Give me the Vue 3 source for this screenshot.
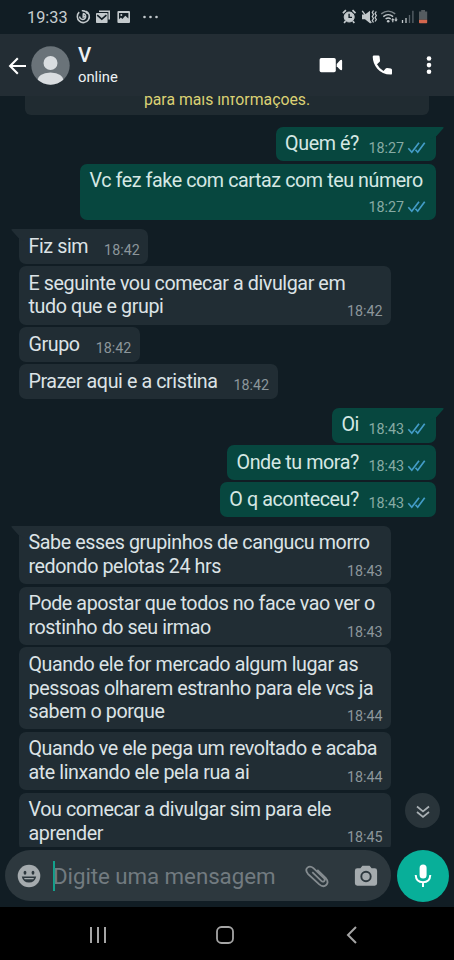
<script setup>
const messages = [
  { lines: ['Quem é?'], time: '18:27', out: true, tail: true },
  { lines: ['Vc fez fake com cartaz com teu número'], time: '18:27', out: true, below: true },
  { lines: ['Fiz sim'], time: '18:42', tail: true },
  { lines: ['E seguinte vou comecar a divulgar em', 'tudo que e grupi'], time: '18:42', wide: true },
  { lines: ['Grupo'], time: '18:42' },
  { lines: ['Prazer aqui e a cristina'], time: '18:42' },
  { lines: ['Oi'], time: '18:43', out: true, tail: true },
  { lines: ['Onde tu mora?'], time: '18:43', out: true },
  { lines: ['O q aconteceu?'], time: '18:43', out: true },
  { lines: ['Sabe esses grupinhos de cangucu morro', 'redondo pelotas 24 hrs'], time: '18:43', wide: true, tail: true },
  { lines: ['Pode apostar que todos no face vao ver o', 'rostinho do seu irmao'], time: '18:43', wide: true },
  { lines: ['Quando ele for mercado algum lugar as', 'pessoas olharem estranho para ele vcs ja', 'sabem o porque'], time: '18:44', wide: true },
  { lines: ['Quando ve ele pega um revoltado e acaba', 'ate linxando ele pela rua ai'], time: '18:44', wide: true },
  { lines: ['Vou comecar a divulgar sim para ele', 'aprender'], time: '18:45', wide: true }
]
</script>

<template>
  <div class="phone">
    <div class="status">
      <span class="clock">19:33</span>
      <svg class="s-left" width="86" height="18" viewBox="0 0 86 18">
        <g fill="none" stroke="#c3c9cc" stroke-width="1.6">
          <path d="M4.2 4.2A6 6 0 1 0 11 3.2" />
          <path d="M6.8 2.8A6 6 0 0 1 12.8 6" />
          <path d="M4.7 8.4a3 3 0 1 0 3-2.9M8.2 6.3v2.8l2-.9" stroke-width="1.5" />
        </g>
        <path d="M24 2.4h11v9.2h-1.6V4H24z" fill="#c3c9cc" />
        <rect x="21" y="5" width="11.6" height="10" rx=".8" fill="#c3c9cc" />
        <path d="m22.2 7.2 4.6 4 4.6-4" fill="none" stroke="#121e25" stroke-width="1.6" />
        <path d="M43.5 3h10.4q1.1 0 1.1 1.1v9.8q0 1.1-1.1 1.1H43.500q-1.100 0-1.100-1.100V4.100Q42.400 3 43.500 3z" fill="#c3c9cc" />
        <path d="M44 5h9.400v5.600L50.300 7.700l-2.900 3.200-1.500-1.500L44 11.200z" fill="#121e25" />
        <circle cx="46.300" cy="7" r="1" fill="#c3c9cc" />
        <g fill="#c3c9cc"><circle cx="69.500" cy="9" r="1.300" /><circle cx="75.500" cy="9" r="1.300" /><circle cx="81.500" cy="9" r="1.300" /></g>
      </svg>
      <svg class="s-right" width="88" height="18" viewBox="0 0 88 18">
        <g fill="none" stroke="#c3c9cc">
          <circle cx="7.200" cy="9" r="5" fill="#c3c9cc" stroke-width="1" />
          <path d="m.9 5.200 3-3M13.500 5.200l-3-3M3.600 13l-1.500 2M10.800 13l1.500 2" stroke-width="1.700" />
          <path d="M7.100 5.700v3.700h2.900" stroke="#121e25" stroke-width="1.400" />
          <path d="m20.200 2.800 9 12.200" stroke-width="1.300" />
          <path d="M31.500 2.500l-1.200 2 1.200 2-1.200 2 1.200 2-1.200 2 1.200 2M34.300 3.500l-1.200 2 1.200 2-1.200 2 1.200 2-1.200 2" stroke-width="1.300" />
        </g>
        <path d="M20 6.500h3l5-3.800v12.500l-5-3.900h-3z" fill="#c3c9cc" />
        <g fill="none" stroke="#c3c9cc" stroke-width="1.400">
          <path d="M39.200 5.900q7-5.600 14 0" stroke="#7c858a" /><path d="M41.300 8.600q4.900-3.900 9.800 0M43.600 11q2.600-2 5.200 0" />
        </g>
        <circle cx="46.200" cy="13.300" r="1.300" fill="#c3c9cc" />
        <path d="m49 12.300 1.800-2.300 1.800 2.300h-1.200v2h-1.200v-2zM52.300 11.500l1.700 2.300 1.700-2.300h-1.100v-2h-1.200v2z" fill="#c3c9cc" />
        <path d="M60.500 12v3M64 10v5" stroke="#c3c9cc" stroke-width="1.300" /><path d="M67.500 7v8M70.900 2.800V15" stroke="#59636a" stroke-width="1.300" />
        <path d="M77 3.500h2.200V2h3.800v1.500h2.200v8.300H77z" fill="#555c60" /><path d="M77 11.800h8.200v2.700q0 .8-.8.8h-6.600q-.8 0-.8-.8z" fill="#d4674e" />
      </svg>
    </div>
    <header class="header">
      <svg class="back" width="20" height="20" viewBox="0 0 20 20"><path d="M18 10H2.500M9.800 2.300 2.100 10l7.700 7.700" fill="none" stroke="#fff" stroke-width="2.100" /></svg>
      <svg class="avatar" width="39" height="39" viewBox="0 0 39 39">
        <defs><clipPath id="face"><circle cx="19.500" cy="19.500" r="19.200" /></clipPath></defs>
        <circle cx="19.500" cy="19.500" r="19.200" fill="#6a7379" />
        <g clip-path="url(#face)" fill="#d9dde0"><circle cx="19.500" cy="17" r="7" /><path d="M6 35q1-8 13.500-8.500Q32 27 33 35v4H6z" /></g>
      </svg>
      <div class="who"><div class="name">V</div><div class="online">online</div></div>
      <svg class="actions" width="120" height="24" viewBox="0 0 120 24" fill="#fff">
        <rect x="1.600" y="5" width="16.200" height="14.200" rx="1.700" /><path d="M18.700 11l3.400-3.700q2-1.200 2 .8v7.900q0 2-2 .8L18.700 13.200z" />
        <path d="M56 2.500h4.300q1.200 0 1.300 1.200l.4 3.800q.1 1-.6 1.600l-2.400 2.200q2.200 4.200 6.500 6.700l2.200-2.500q.6-.7 1.600-.5l3.500.6q1.200.2 1.200 1.400v3.400q0 1.200-1.300 1.200Q64 21.200 59.300 15.700 54.900 10.600 54.700 3.800 54.700 2.500 56 2.500z" />
        <circle cx="111" cy="5.500" r="2.300" /><circle cx="111" cy="12.100" r="2.300" /><circle cx="111" cy="18.700" r="2.300" />
      </svg>
    </header>
    <main class="chat">
      <div class="notice"><span>para mais informações.</span></div>
      <div v-for="(m, i) in messages" :key="i" class="bubble" :class="{ out: m.out, tail: m.tail, wide: m.wide, below: m.below }">
        <svg v-if="m.tail" class="beak" width="14" height="12" viewBox="0 0 14 12"><path d="M14 0H1.500Q-.3 0 .8 1.500L7.500 9 14 12z" /></svg>
        <div class="text"><div v-for="line in m.lines" :key="line" class="line">{{ line }}</div></div>
        <span class="meta">{{ m.time }}
          <svg v-if="m.out" class="ticks" width="19" height="13" viewBox="0 0 19 13"><path d="m1.300 7.200 3.500 4L12 1.800M8.500 8.800l2.200 2.400 7-9.400" fill="none" stroke="#439cc7" stroke-width="1.700" /></svg>
        </span>
      </div>
      <div class="jump">
        <svg width="16" height="16" viewBox="0 0 16 16"><path d="m2 2.500 6 5 6-5M2 8l6 5 6-5" fill="none" stroke="#a9b0b4" stroke-width="1.700" /></svg>
      </div>
    </main>
    <footer class="composer">
      <div class="field">
        <svg class="smile" width="24" height="24" viewBox="0 0 24 24"><circle cx="12" cy="12" r="11.300" fill="#a5abae" /><ellipse cx="8" cy="8.700" rx="1.400" ry="2" fill="#2d383e" /><ellipse cx="16" cy="8.700" rx="1.400" ry="2" fill="#2d383e" /><path d="M4.800 12.500h14.400q-1.200 6-7.200 6t-7.200-6z" fill="#2d383e" /><path d="M7 14h10l-.7 1.300H7.700z" fill="#a5abae" /></svg>
        <i class="caret"></i>
        <span class="placeholder">Digite uma mensagem</span>
        <svg class="clip" width="26" height="24" viewBox="0 0 26 24"><path d="M8.300 8.200l9 8.600q1.600 1.600 2.900.3t-.3-2.900L9.400 4.200Q6.200 1.300 3.500 3.600T3.900 9.800L15 20.100q4.200 3.700 7.200.9t-.6-7.200L13.300 5.900" fill="none" stroke="#858c90" stroke-width="1.800" /></svg>
        <svg class="camera" width="24" height="22" viewBox="0 0 24 22"><path d="M8.400.8h7.200l2 2.500h3.100q2.400 0 2.400 2.400V18.300q0 2.400-2.400 2.400H3.300q-2.400 0-2.400-2.400V5.700q0-2.400 2.400-2.400h3.100z" fill="#a5abae" /><circle cx="12" cy="11.500" r="4.700" fill="none" stroke="#2d383e" stroke-width="1.900" /></svg>
      </div>
      <div class="mic"><svg width="20" height="26" viewBox="0 0 20 26"><rect x="6.600" y="1.600" width="7" height="14" rx="3.500" fill="#fff" /><path d="M2.700 12q.4 7.200 7.300 7.200t7.300-7.200M10 19v5" fill="none" stroke="#fff" stroke-width="2" /></svg></div>
    </footer>
    <nav class="nav">
      <svg width="18" height="20" viewBox="0 0 18 20"><path d="M2 2v16M9 2v16M16 2v16" stroke="#a5a5a5" stroke-width="2" /></svg>
      <svg width="20" height="20" viewBox="0 0 20 20"><rect x="2" y="2" width="16" height="16" rx="4.500" fill="none" stroke="#a5a5a5" stroke-width="1.800" /></svg>
      <svg width="18" height="20" viewBox="0 0 18 20"><path d="M13 2 5 10l8 8" fill="none" stroke="#a5a5a5" stroke-width="2" /></svg>
    </nav>
  </div>
</template>

<style>
body { margin: 0; background: #000; }
</style>
<style scoped>
* { box-sizing: border-box; }
svg { display: block; flex: none; }
.phone { width: 454px; height: 960px; display: flex; flex-direction: column; overflow: hidden; background: #111d24; font-family: Roboto, sans-serif; color: #dce3e6; }
.status { height: 34px; display: flex; align-items: center; padding: 1px 24px 0 27px; flex: none; }
.clock { width: 48px; font-size: 16.300px; color: #c7cdd0; }
.s-right { margin-left: auto; margin-top: -1px; }
.s-left { margin-top: -1px; }
.header { height: 62px; flex: none; background: #232d34; display: flex; align-items: center; padding: 0 10px 0 8px; color: #edf1f3; }
.back { margin-top: 1px; }
.avatar { margin: 0 0 0 3px; }
.who { margin-left: 8px; margin-top: 2px; }
.name { font-size: 20.500px; line-height: 22px; font-weight: 500; }
.online { font-size: 14.800px; line-height: 23px; }
.actions { margin-left: auto; margin-right: 6px; }
.chat { position: relative; height: 751px; flex: none; overflow: hidden; display: flex; flex-direction: column; align-items: flex-start; padding: 0 18px 0 19px; }
.notice { width: 404px; height: 18.500px; flex: none; margin: 0 0 12.300px 6px; border-radius: 0 0 6px 6px; background: #202b31; display: flex; align-items: flex-end; justify-content: center; overflow: hidden; color: #dbd174; font-size: 15.800px; line-height: 22px; padding-bottom: 4px; }
.bubble { position: relative; flex: none; display: flex; margin-bottom: 2.400px; padding: 5.500px 8.500px 5.500px 9.500px; border-radius: 7px; background: #212d34; }
.bubble.out { align-self: flex-end; background: #07473f; color: #d5e8e4; }
.bubble.tail:not(:nth-child(2)) { margin-top: 6.800px; }
.bubble.tail:not(.out) { border-top-left-radius: 0; }
.bubble.tail.out { border-top-right-radius: 0; }
.bubble.wide { width: 372px; justify-content: space-between; }
.bubble.below { width: 356px; padding-bottom: 27px; }
.text { font-size: 19.700px; line-height: 23.670px; letter-spacing: -.42px; white-space: nowrap; }
.line { width: max-content; }
.meta { align-self: flex-end; display: flex; align-items: center; gap: 4px; margin-left: 16px; margin-bottom: -2px; font-size: 14.300px; line-height: 19px; color: #8c969b; }
.out .meta { margin-left: 9.500px; color: #87aba4; }
.ticks { margin: -2px 1.500px 0 -1px; }
.wide .meta { margin-left: 0; }
.wide .text { width: 0; }
.below .meta { position: absolute; right: 8.500px; bottom: 5.500px; }
.beak { position: absolute; left: -8px; top: 0; fill: #212d34; }
.out .beak { left: auto; right: -8px; transform: scaleX(-1); fill: #07473f; }
.jump { position: absolute; left: 405px; top: 697px; width: 35px; height: 35px; border-radius: 50%; background: #29343a; display: flex; align-items: center; justify-content: center; padding-top: 3px; }
.composer { height: 60px; flex: none; display: flex; align-items: flex-start; gap: 6px; padding: 3px 5px 0; }
.field { width: 386px; height: 51px; border-radius: 26px; background: #2d383e; display: flex; align-items: center; padding: 0 13px 0 12px; }
.caret { width: 2px; height: 30px; background: #13a18c; margin-left: 12px; }
.placeholder { margin-left: -2px; font-size: 22.300px; line-height: 28px; letter-spacing: -.05px; color: #727b80; white-space: nowrap; }
.clip { margin-left: auto; }
.camera { margin-left: 24px; }
.mic { width: 52px; height: 52px; border-radius: 50%; background: #08af99; display: flex; align-items: center; justify-content: center; }
.nav { flex: 1; background: #000; display: flex; align-items: center; justify-content: space-between; padding: 3px 93px 0 89px; }
</style>
